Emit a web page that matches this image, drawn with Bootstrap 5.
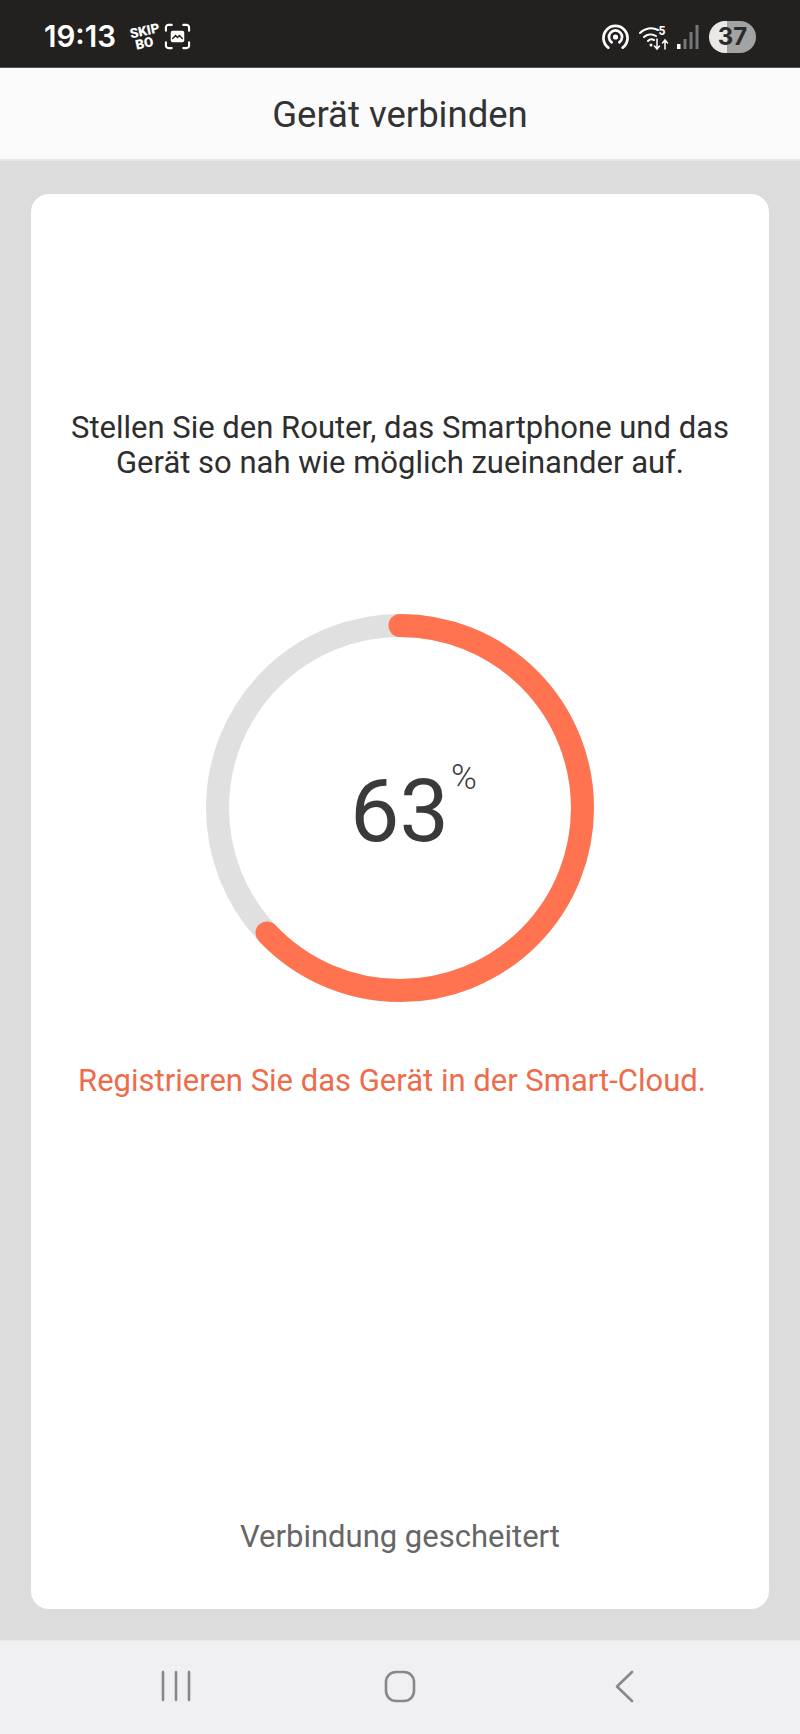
<!DOCTYPE html>
<html lang="de">
<head>
    <meta charset="UTF-8">
    <meta name="viewport" content="width=device-width, initial-scale=1.0">
    <title>Gerät verbinden</title>
    <link href="https://cdn.jsdelivr.net/npm/bootstrap@5.3.0/dist/css/bootstrap.min.css" rel="stylesheet">
    <style>
        body { font-family: Roboto, "Liberation Sans", sans-serif; background: #dcdcdc; height: 1734px; overflow: hidden; }
        .phone-status { height: 68px; background: #232120; border-bottom: 1px solid #555; color: #fff; padding: 6px 44px 0 44px; }
        .status-time { font-family: Inter, Roboto, sans-serif; font-size: 29.5px; font-weight: 600; line-height: 1; }
        .status-skip { width: 24px; font-size: 13.5px; line-height: 12px; font-weight: 900; text-align: center; transform: rotate(-12deg); margin: 0 9px 0 15px; }
        .status-wifi { margin-left: 10px; }
        .status-bars { margin-left: 7px; }
        .status-batt { width: 47px; height: 32px; border-radius: 16px; background: linear-gradient(90deg, #e8e8e8 0 38%, #a3a3a3 38% 100%); color: #2b2b2b; font-family: Inter, Roboto, sans-serif; font-size: 24px; font-weight: 700; line-height: 32px; text-align: center; margin-left: 10px; }
        .app-head { height: 93px; background: #fbfbfb; border-bottom: 2px solid #e6e6e6; color: #333; font-size: 36.5px; padding-top: 4px; }
        .app-body { padding: 33px 31px 31px; height: 1479px; }
        .panel-box { height: 100%; border-radius: 18px; background: #fff; padding-top: 217px; }
        .hint-text { font-size: 31px; line-height: 34.5px; color: #2e2e2e; }
        .ring-wrap { width: 390px; height: 390px; margin-top: 133px; margin-left: -1px; }
        .ring-label { inset: 0; color: #3a3a3a; font-size: 88px; line-height: 1; padding-top: 6px; }
        .ring-num { display: inline-block; }
        .ring-pct { left: 100%; top: -7px; margin-left: 2px; font-size: 35px; line-height: 1; font-weight: 300; }
        .state-text { margin-top: 60px; padding-right: 16px; color: #ee6c4a; font-size: 31px; line-height: 35px; }
        .fail-text { color: #666; font-size: 31px; padding-bottom: 49px; }
        .sys-nav { height: 94px; background: #f0f0f2; border-top: 1px solid #e8e8ea; }
    </style>
</head>
<body>
<div class="phone-status d-flex align-items-center">
    <span class="status-time">19:13</span>
    <span class="status-skip">SKIP<br>BO</span>
    <svg width="27" height="27" viewBox="0 0 28 28" fill="none" stroke="#fff" stroke-width="2.200" stroke-linecap="round">
        <path d="M2 8V4.500A2.500 2.500 0 0 1 4.500 2H8M20 2h3.500A2.500 2.500 0 0 1 26 4.500V8M26 20v3.500A2.500 2.500 0 0 1 23.500 26H20M8 26H4.500A2.500 2.500 0 0 1 2 23.500V20"/>
        <rect x="7" y="8" width="14" height="12" rx="2" fill="#fff" stroke="none"/>
        <path d="M9 16l3-3 2 2 2-2 3 3" stroke="#232120" stroke-width="1.500"/>
    </svg>
    <div class="ms-auto d-flex align-items-center">
        <svg width="27" height="26" viewBox="0 0 28 27" fill="none" stroke="#fff" stroke-width="2.800" stroke-linecap="round">
            <path d="M6.500 24.500a12.500 12.500 0 1 1 15 0"/>
            <path d="M10 19a6.800 6.800 0 1 1 8 0"/>
            <circle cx="14" cy="13.500" r="1.300"/>
        </svg>
        <svg class="status-wifi" width="30" height="28" viewBox="0 0 30 28" fill="none" stroke="#fff" stroke-width="2" stroke-linecap="round">
            <path d="M1 10a15 15 0 0 1 18-3M5 14a10 10 0 0 1 12-1M9 18a5 5 0 0 1 6-1"/>
            <circle cx="12" cy="22" r="1.500" fill="#fff" stroke="none"/>
            <path d="M18 16v10m-2.500-3 2.500 3 2.500-3M26 26v-9m-2.500 3 2.500-3 2.500 3" stroke-width="1.500"/>
            <text x="19.500" y="12" font-size="12" font-weight="700" fill="#fff" stroke="none" font-family="Roboto">5</text>
        </svg>
        <svg class="status-bars" width="23" height="26" viewBox="0 0 23 26">
            <rect x="1" y="20" width="3.500" height="5" fill="#fff"/>
            <rect x="7.500" y="15" width="3" height="10" fill="#777"/>
            <rect x="13.500" y="8" width="3" height="17" fill="#777"/>
            <rect x="19.500" y="1" width="3" height="24" fill="#777"/>
        </svg>
        <span class="status-batt">37</span>
    </div>
</div>

<div class="app-head d-flex align-items-center justify-content-center">Gerät verbinden</div>

<div class="app-body">
    <div class="panel-box d-flex flex-column align-items-center text-center">
        <div class="hint-text">Stellen Sie den Router, das Smartphone und das<br>Gerät so nah wie möglich zueinander auf.</div>
        <div class="ring-wrap position-relative">
            <svg width="390" height="390" viewBox="0 0 390 390" fill="none" stroke-width="23">
                <circle cx="195" cy="195" r="182.500" stroke="#e0e0e0"/>
                <circle cx="195" cy="195" r="182.500" stroke="#ff7350" stroke-linecap="round" pathLength="100" stroke-dasharray="63 100" transform="rotate(-90 195 195)"/>
            </svg>
            <div class="ring-label position-absolute d-flex align-items-center justify-content-center">
                <span class="ring-num position-relative">63<span class="ring-pct position-absolute">%</span></span>
            </div>
        </div>
        <div class="state-text">Registrieren Sie das Gerät in der Smart-Cloud.</div>
        <div class="fail-text mt-auto">Verbindung gescheitert</div>
    </div>
</div>

<div class="sys-nav d-flex align-items-center">
    <svg width="800" height="93" viewBox="0 0 800 93" fill="none" stroke="#888" stroke-width="2.600" stroke-linecap="round" stroke-linejoin="round">
        <path d="M163 31v28M176 31v28M189 31v28"/>
        <rect x="386" y="31" width="28" height="29" rx="10"/>
        <path d="M632 31 617 45.500 632 60"/>
    </svg>
</div>

<script src="https://cdn.jsdelivr.net/npm/bootstrap@5.3.0/dist/js/bootstrap.bundle.min.js"></script>
</body>
</html>
